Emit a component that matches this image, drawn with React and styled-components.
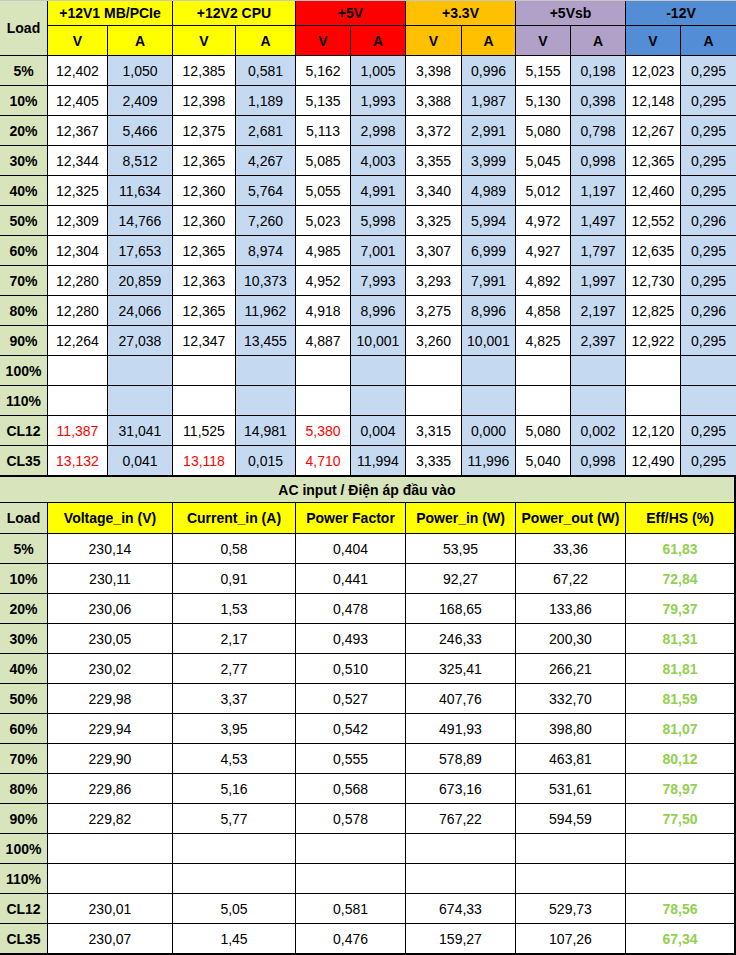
import React from "react";
import styled, { createGlobalStyle } from "styled-components";

const GlobalStyle = createGlobalStyle`
  body {
    margin: 0;
    background: #fff;
    font-family: "Liberation Sans", Arial, sans-serif;
  }
`;

const Sheet = styled.div`
  width: 736px;
  display: flex;
  flex-direction: column;
`;

const Grid = styled.div`
  display: grid;
  grid-template-columns: ${(props) => props.$cols};
  grid-template-rows: ${(props) => props.$rows};
  gap: 1px;
  background: #000;
  box-sizing: border-box;
  width: 736px;
`;

const TopGrid = styled(Grid)`
  border-top: 1px solid #c8c8c8;
  padding-bottom: 2px;
`;

const BottomGrid = styled(Grid)`
  padding: 0 2px 2px 0;
`;

const Cell = styled.div`
  display: flex;
  align-items: center;
  justify-content: center;
  font-size: 14px;
  white-space: nowrap;
  background: ${(props) => props.$bg || "#fff"};
  color: ${(props) => props.$color || "#000"};
  font-weight: ${(props) => (props.$bold ? 700 : 400)};
  grid-column: ${(props) => (props.$span ? `span ${props.$span}` : "auto")};
  grid-row: ${(props) => (props.$rowSpan ? `span ${props.$rowSpan}` : "auto")};
`;

const OLIVE = "#d8e4bc";
const BLUE_CELL = "#c5d9f1";
const RED = "#ff0000";
const GREEN = "#92d050";

const rails = [
  { name: "+12V1 MB/PCIe", bg: "#ffff00" },
  { name: "+12V2 CPU", bg: "#ffff00" },
  { name: "+5V", bg: "#ff0000" },
  { name: "+3.3V", bg: "#ffc000" },
  { name: "+5Vsb", bg: "#b1a0c7" },
  { name: "-12V", bg: "#538dd5" },
];

// "!" prefix marks a value printed in red
const outputRows = [
  ["5%", "12,402", "1,050", "12,385", "0,581", "5,162", "1,005", "3,398", "0,996", "5,155", "0,198", "12,023", "0,295"],
  ["10%", "12,405", "2,409", "12,398", "1,189", "5,135", "1,993", "3,388", "1,987", "5,130", "0,398", "12,148", "0,295"],
  ["20%", "12,367", "5,466", "12,375", "2,681", "5,113", "2,998", "3,372", "2,991", "5,080", "0,798", "12,267", "0,295"],
  ["30%", "12,344", "8,512", "12,365", "4,267", "5,085", "4,003", "3,355", "3,999", "5,045", "0,998", "12,365", "0,295"],
  ["40%", "12,325", "11,634", "12,360", "5,764", "5,055", "4,991", "3,340", "4,989", "5,012", "1,197", "12,460", "0,295"],
  ["50%", "12,309", "14,766", "12,360", "7,260", "5,023", "5,998", "3,325", "5,994", "4,972", "1,497", "12,552", "0,296"],
  ["60%", "12,304", "17,653", "12,365", "8,974", "4,985", "7,001", "3,307", "6,999", "4,927", "1,797", "12,635", "0,295"],
  ["70%", "12,280", "20,859", "12,363", "10,373", "4,952", "7,993", "3,293", "7,991", "4,892", "1,997", "12,730", "0,295"],
  ["80%", "12,280", "24,066", "12,365", "11,962", "4,918", "8,996", "3,275", "8,996", "4,858", "2,197", "12,825", "0,296"],
  ["90%", "12,264", "27,038", "12,347", "13,455", "4,887", "10,001", "3,260", "10,001", "4,825", "2,397", "12,922", "0,295"],
  ["100%", "", "", "", "", "", "", "", "", "", "", "", ""],
  ["110%", "", "", "", "", "", "", "", "", "", "", "", ""],
  ["CL12", "!11,387", "31,041", "11,525", "14,981", "!5,380", "0,004", "3,315", "0,000", "5,080", "0,002", "12,120", "0,295"],
  ["CL35", "!13,132", "0,041", "!13,118", "0,015", "!4,710", "11,994", "3,335", "11,996", "5,040", "0,998", "12,490", "0,295"],
];

const inputHeaders = ["Voltage_in (V)", "Current_in (A)", "Power Factor", "Power_in (W)", "Power_out (W)", "Eff/HS (%)"];

const inputRows = [
  ["5%", "230,14", "0,58", "0,404", "53,95", "33,36", "61,83"],
  ["10%", "230,11", "0,91", "0,441", "92,27", "67,22", "72,84"],
  ["20%", "230,06", "1,53", "0,478", "168,65", "133,86", "79,37"],
  ["30%", "230,05", "2,17", "0,493", "246,33", "200,30", "81,31"],
  ["40%", "230,02", "2,77", "0,510", "325,41", "266,21", "81,81"],
  ["50%", "229,98", "3,37", "0,527", "407,76", "332,70", "81,59"],
  ["60%", "229,94", "3,95", "0,542", "491,93", "398,80", "81,07"],
  ["70%", "229,90", "4,53", "0,555", "578,89", "463,81", "80,12"],
  ["80%", "229,86", "5,16", "0,568", "673,16", "531,61", "78,97"],
  ["90%", "229,82", "5,77", "0,578", "767,22", "594,59", "77,50"],
  ["100%", "", "", "", "", "", ""],
  ["110%", "", "", "", "", "", ""],
  ["CL12", "230,01", "5,05", "0,581", "674,33", "529,73", "78,56"],
  ["CL35", "230,07", "1,45", "0,476", "159,27", "107,26", "67,34"],
];

const topCols = "47px 59px 64px 62px 59px 54px 54px 55px 53px 54px 54px 54px 55px";
const topRows = "24px 29px repeat(14, 29px)";
const bottomCols = "47px 124px 122px 109px 109px 109px 108px";
const bottomRows = "25px 30px repeat(14, 29px)";

export default function App() {
  return (
    <>
      <GlobalStyle />
      <Sheet>
        <TopGrid $cols={topCols} $rows={topRows}>
          <Cell $bg={OLIVE} $bold $rowSpan={2}>
            Load
          </Cell>
          {rails.map((rail) => (
            <Cell key={rail.name} $bg={rail.bg} $bold $span={2}>
              {rail.name}
            </Cell>
          ))}
          {rails.map((rail) => (
            <React.Fragment key={rail.name + "-va"}>
              <Cell $bg={rail.bg} $bold>V</Cell>
              <Cell $bg={rail.bg} $bold>A</Cell>
            </React.Fragment>
          ))}
          {outputRows.map((row) =>
            row.map((value, i) => {
              if (i === 0) {
                return (
                  <Cell key={row[0] + i} $bg={OLIVE} $bold>
                    {value}
                  </Cell>
                );
              }
              const red = value.startsWith("!");
              return (
                <Cell
                  key={row[0] + i}
                  $bg={i % 2 === 0 ? BLUE_CELL : "#fff"}
                  $color={red ? RED : "#000"}
                >
                  {red ? value.slice(1) : value}
                </Cell>
              );
            })
          )}
        </TopGrid>
        <BottomGrid $cols={bottomCols} $rows={bottomRows}>
          <Cell $bg={OLIVE} $bold $span={7}>
            AC input / Điện áp đầu vào
          </Cell>
          <Cell $bg={OLIVE} $bold>
            Load
          </Cell>
          {inputHeaders.map((h) => (
            <Cell key={h} $bg="#ffff00" $bold>
              {h}
            </Cell>
          ))}
          {inputRows.map((row) =>
            row.map((value, i) => (
              <Cell
                key={row[0] + i}
                $bg={i === 0 ? OLIVE : "#fff"}
                $bold={i === 0 || i === 6}
                $color={i === 6 ? GREEN : "#000"}
              >
                {value}
              </Cell>
            ))
          )}
        </BottomGrid>
      </Sheet>
    </>
  );
}
